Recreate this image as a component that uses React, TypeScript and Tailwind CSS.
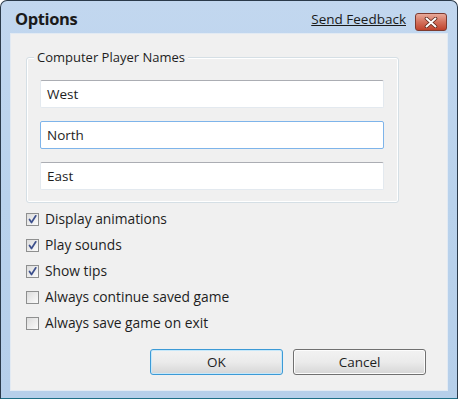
import React from "react";

const font = { fontFamily: '"Open Sans", "Noto Sans", sans-serif' };

function Check({ checked, label }: { checked: boolean; label: string }) {
  return (
    <div className="flex items-center h-[26px]">
      <div className="w-[13px] h-[13px] border border-[#8e8f8f] bg-gradient-to-br from-[#dcdcdc] to-[#fbfbfb] flex items-center justify-center">
        {checked && (
          <svg width="11" height="11" viewBox="0 0 11 11">
            <path d="M2.5 5.5 L4.5 8.5 L8.8 1.8" fill="none" stroke="#3c4f8c" strokeWidth="1.7" strokeLinecap="round" strokeLinejoin="round" />
          </svg>
        )}
      </div>
      <span className="ml-[6px] text-[13.8px] text-[#1e1e1e] leading-none">{label}</span>
    </div>
  );
}

function Field({ value, focused }: { value: string; focused?: boolean }) {
  return (
    <div
      className={
        "h-[28px] bg-white flex items-center pl-[6px] text-[13.5px] text-[#1e1e1e] border rounded-[2px] " +
        (focused ? "border-[#7eb4ea]" : "border-[#e3e9ef] border-t-[#abadb3]")
      }
    >
      {value}
    </div>
  );
}

export default function App() {
  return (
    <div style={font} className="w-[459px] h-[400px] bg-white">
      <div className="w-[458px] h-[399px] border border-[#2b3a4a] border-b-[#1f6f86] rounded-t-[7px] bg-gradient-to-b from-[#c2d7ef] via-[#b9d2ec] to-[#b6cfea] flex flex-col">
        <div className="h-[32px] flex items-start">
          <div className="ml-[14px] mt-[10px] text-[16.5px] font-bold text-[#1a1a1a] leading-none tracking-[-0.4px]">Options</div>
          <div className="ml-auto mt-[12px] text-[13.5px] text-[#1a1a1a] underline leading-none">Send Feedback</div>
          <div className="ml-[9px] mr-[10px] mt-[12px] w-[32px] h-[18px] rounded-[3px] border border-[#7d3b30] bg-gradient-to-b from-[#e8a99a] via-[#d3705c] to-[#c0412b] flex items-center justify-center">
            <svg width="14" height="11" viewBox="0 0 14 11">
              <path d="M2.5 1.5 L11.5 9.5 M11.5 1.5 L2.5 9.5" stroke="#5a2418" strokeWidth="3.6" strokeLinecap="round" />
              <path d="M2.5 1.5 L11.5 9.5 M11.5 1.5 L2.5 9.5" stroke="#ffffff" strokeWidth="2" strokeLinecap="round" />
            </svg>
          </div>
        </div>
        <div className="mx-[9px] h-[358px] bg-[#f0f0f0] border border-[#e2eaf3] flex flex-col">
          <div className="relative ml-[15px] mt-[23px] w-[373px] h-[146px] border border-[#d5dfe5] rounded-[3px] shadow-[inset_0_0_0_1px_#ffffff]">
            <div className="absolute left-[7px] top-[-9px] px-[3px] bg-[#f0f0f0] text-[13px] text-[#1e1e1e] leading-[16px]">
              Computer Player Names
            </div>
            <div className="mt-[22px] ml-[13px] mr-[14px] flex flex-col gap-[13px]">
              <Field value="West" />
              <Field value="North" focused />
              <Field value="East" />
            </div>
          </div>
          <div className="ml-[15px] mt-[3px] flex flex-col">
            <Check checked label="Display animations" />
            <Check checked label="Play sounds" />
            <Check checked label="Show tips" />
            <Check checked={false} label="Always continue saved game" />
            <Check checked={false} label="Always save game on exit" />
          </div>
          <div className="mt-[13px] flex gap-[10px] ml-[139px]">
            <div className="w-[133px] h-[26px] rounded-[3px] border border-[#3c9ad6] shadow-[inset_0_0_0_1px_#c6e8fa] bg-gradient-to-b from-[#f2f2f2] via-[#ebebeb] to-[#d6d6d6] flex items-center justify-center text-[13.5px] text-[#1e1e1e]">
              OK
            </div>
            <div className="w-[133px] h-[26px] rounded-[3px] border border-[#707070] shadow-[inset_0_0_0_1px_#fcfcfc] bg-gradient-to-b from-[#f2f2f2] via-[#ebebeb] to-[#d6d6d6] flex items-center justify-center text-[13.5px] text-[#1e1e1e]">
              Cancel
            </div>
          </div>
        </div>
      </div>
    </div>
  );
}
